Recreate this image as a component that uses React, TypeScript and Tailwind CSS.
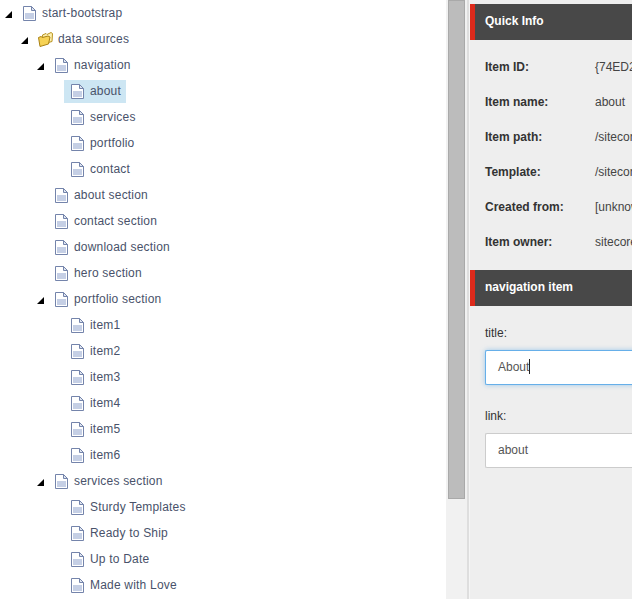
const tree: [number, string, boolean?][] = [
  [0, 'start-bootstrap', true],
  [1, 'data sources', true],
  [2, 'navigation', true],
  [3, 'about'],
  [3, 'services'],
  [3, 'portfolio'],
  [3, 'contact'],
  [2, 'about section'],
  [2, 'contact section'],
  [2, 'download section'],
  [2, 'hero section'],
  [2, 'portfolio section', true],
  [3, 'item1'],
  [3, 'item2'],
  [3, 'item3'],
  [3, 'item4'],
  [3, 'item5'],
  [3, 'item6'],
  [2, 'services section', true],
  [3, 'Sturdy Templates'],
  [3, 'Ready to Ship'],
  [3, 'Up to Date'],
  [3, 'Made with Love'],
];

const info = [
  ['Item ID:', '{74ED2B5C-7F3A-4C1E-9A60-1D2E'],
  ['Item name:', 'about'],
  ['Item path:', '/sitecore/content/start-bootstrap'],
  ['Template:', '/sitecore/templates/navigation'],
  ['Created from:', '[unknown]'],
  ['Item owner:', 'sitecore\\admin'],
];

function PageIcon() {
  return (
    <svg width="13" height="15" viewBox="0 0 13 15" className="shrink-0">
      <path d="M.5 .5H8.5L12.5 4.5V14.5H.5Z" fill="#fff" stroke="#7484ab" />
      <path d="M8.5 .5V4.5H12.5Z" fill="#dfe5f1" stroke="#7484ab" />
      <rect x="2" y="7" width="9" height="6" fill="#c5cfe5" />
    </svg>
  );
}

function FolderIcon() {
  return (
    <svg width="15" height="15" viewBox="0 0 15 15" className="shrink-0 -ml-px -mr-px">
      <path d="M4.5 3 8 1.5 9 2.5 13 .5 14.5 1.5 14 9.5 5 12Z" fill="#fdf0b0" stroke="#b8921f" />
      <path d="M.5 5.5 3 4.5 4.5 5.5 10 4 12 5 10.5 12 2 14.5Z" fill="#f6d255" stroke="#a98114" />
    </svg>
  );
}

function Arrow() {
  return <div className="w-0 h-0 border-l-[7px] border-l-transparent border-b-[7px] border-b-black" />;
}

function Header({ title }: { title: string }) {
  return (
    <div className="h-9 bg-[#484848] border-l-[5px] border-[#dd2a1b] pl-[10px] pb-[2px] flex items-center text-white text-xs font-bold">
      {title}
    </div>
  );
}

function Field({ label, value, focused }: { label: string; value: string; focused?: boolean }) {
  return (
    <div>
      <div className="text-xs text-[#333] h-[17px] pt-px leading-4">{label}</div>
      <div
        className={`mt-[9px] h-[35px] w-[180px] bg-white rounded-l-[2px] border border-r-0 pl-3 pb-[2px] flex items-center text-xs text-[#555] ${
          focused ? 'border-[#66afe9] shadow-[0_0_5px_rgba(102,175,233,0.6)]' : 'border-[#ccc]'
        }`}
      >
        {value}
        {focused && <span className="w-px h-[15px] bg-[#222]" />}
      </div>
    </div>
  );
}

export default function App() {
  return (
    <div className="h-[599px] w-[632px] overflow-hidden flex bg-white font-['Liberation_Sans',Arial,sans-serif]">
      <div className="w-[446px] shrink-0">
        {tree.map(([depth, name, open], i) => (
          <div key={i} className="h-[26px] flex items-center" style={{ paddingLeft: 5 + depth * 16 }}>
            <div className="w-[11px] shrink-0 pt-[3px]">{open && <Arrow />}</div>
            <div className={`h-[23px] flex items-center gap-[6px] pl-[7px] pr-[5px] ${name === 'about' ? 'bg-[#cde6f3]' : ''}`}>
              {depth === 1 ? <FolderIcon /> : <PageIcon />}
              <span className="text-xs tracking-[0.2px] text-[#49526a] whitespace-nowrap">{name}</span>
            </div>
          </div>
        ))}
      </div>

      <div className="w-[21px] shrink-0 bg-[#f1f1f1] pl-[2px]">
        <div className="w-[17px] h-[499px] bg-[#bcbcbc] border border-[#a9a9a9]" />
      </div>

      <div className="w-[2px] shrink-0 bg-[#dedede]" />
      <div className="w-px shrink-0 bg-[#f5f5f5]" />

      <div className="flex-1 min-w-0 bg-[#eeeeee] pt-1 overflow-hidden">
        <Header title="Quick Info" />
        <div className="pl-[15px] pt-[9px] pb-[11px]">
          {info.map(([label, value]) => (
            <div key={label} className="h-[35px] flex items-center text-xs whitespace-nowrap">
              <span className="w-[110px] shrink-0 font-bold text-[#333]">{label}</span>
              <span className="text-[#444]">{value}</span>
            </div>
          ))}
        </div>
        <Header title="navigation item" />
        <div className="pl-[15px] pt-[18px] flex flex-col gap-[22px]">
          <Field label="title:" value="About" focused />
          <Field label="link:" value="about" />
        </div>
      </div>
    </div>
  );
}
